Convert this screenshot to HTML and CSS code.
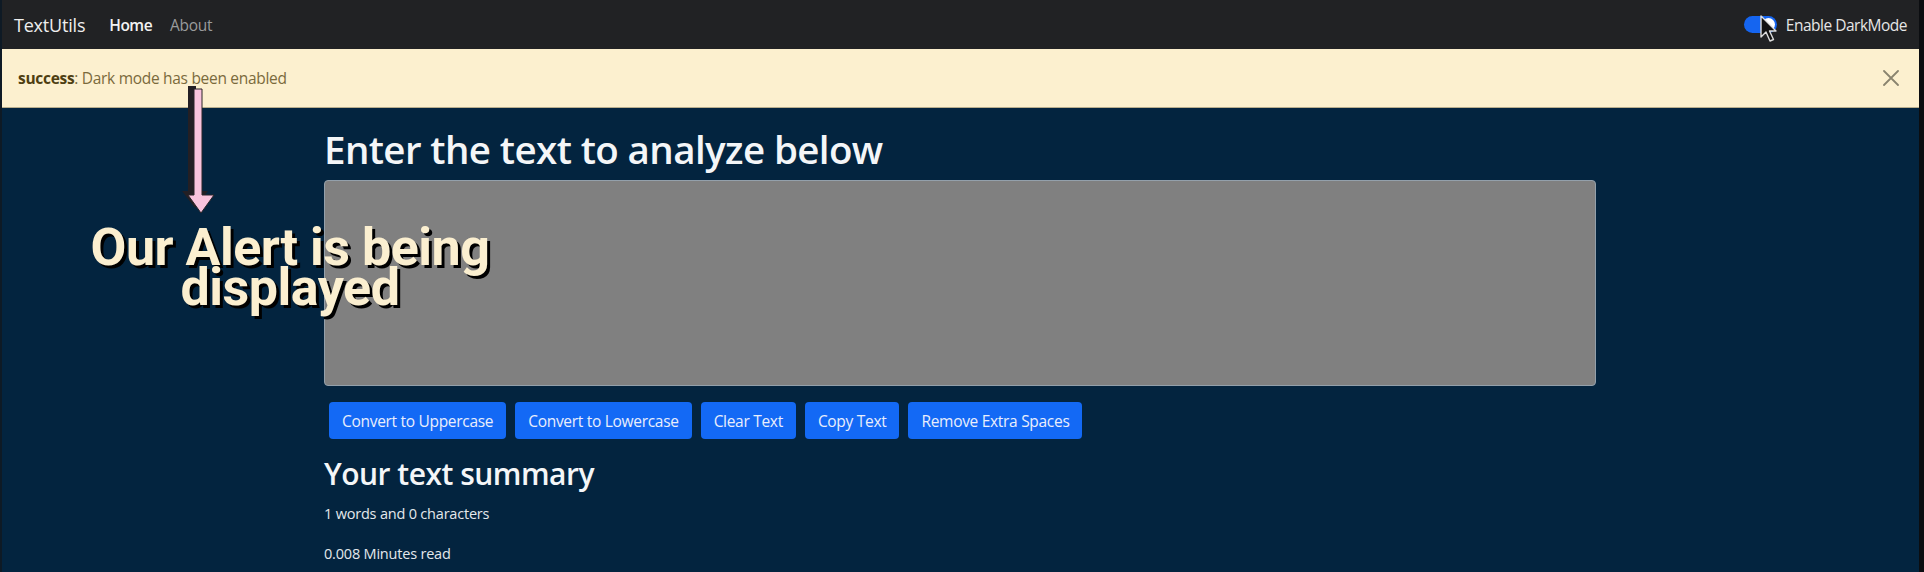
FILE: index.html
```html
<!DOCTYPE html>
<html lang="en">
<head>
<meta charset="utf-8">
<title>TextUtils</title>
<link rel="stylesheet" href="styles.css">
</head>
<body>
<div class="app">
  <nav class="navbar">
    <div class="nav-left">
      <span class="brand">TextUtils</span>
      <a class="nav-link active">Home</a>
      <a class="nav-link">About</a>
    </div>
    <div class="nav-right">
      <span class="switch"><span class="knob"></span></span>
      <label class="switch-label">Enable DarkMode</label>
    </div>
  </nav>

  <div class="alert">
    <span class="alert-text"><strong>success</strong>: Dark mode has been enabled</span>
    <svg class="close" width="16" height="16" viewBox="0 0 16 16"><path d="M1 1L15 15M15 1L1 15" stroke="#8a846f" stroke-width="1.8" fill="none" stroke-linecap="round"/></svg>
  </div>

  <main class="container">
    <h1 class="title">Enter the text to analyze below</h1>
    <textarea class="box" rows="8"></textarea>
    <div class="buttons">
      <button class="btn">Convert to Uppercase</button>
      <button class="btn">Convert to Lowercase</button>
      <button class="btn">Clear Text</button>
      <button class="btn">Copy Text</button>
      <button class="btn">Remove Extra Spaces</button>
    </div>
    <h2 class="summary">Your text summary</h2>
    <p class="stat">1 words and 0 characters</p>
    <p class="stat">0.008 Minutes read</p>
  </main>

  <svg class="arrow" width="50" height="135" viewBox="0 0 50 135">
    <polygon points="16,2 24,2 24,107 36,107 23,124 10,107 16,107" fill="#231f24"/>
    <polygon points="22,5 30,5 30,111 42,111 29,129 16,111 22,111" fill="#f9c3dd" stroke="#2a2428" stroke-width="1"/>
  </svg>

  <div class="caption">Our Alert is being<br>displayed</div>

  <svg class="cursor" width="22" height="30" viewBox="0 0 22 30">
    <path d="M2 1 L2 22 L7 17 L11 26 L14.5 24.5 L10.5 16 L17 16 Z" fill="#111" stroke="#ddd" stroke-width="1.4" stroke-linejoin="round"/>
  </svg>
</div>
</body>
</html>
```

FILE: styles.css
```css
* { box-sizing: border-box; }

html, body {
  margin: 0;
  padding: 0;
}

body {
  background: #0b0d10;
  font-family: "Open Sans", "Liberation Sans", sans-serif;
  color: #ffffff;
  overflow: hidden;
}

.app {
  position: relative;
  margin-right: 5px;
  height: 572px;
  background: #03243f;
  border-left: 2px solid #0e1a25;
}

.navbar {
  height: 49px;
  background: #212224;
  display: flex;
  align-items: center;
  justify-content: space-between;
  padding: 0 12px 0 12px;
}

.nav-left {
  display: flex;
  align-items: center;
}

.brand {
  font-size: 18px;
  color: #eeeeee;
  margin-right: 24px;
  letter-spacing: -0.2px;
}

.nav-link {
  font-size: 15.5px;
  margin-right: 18px;
  color: #9a9b9c;
  letter-spacing: -0.3px;
}

.nav-link.active {
  color: #f2f2f2;
  font-weight: 600;
  letter-spacing: -0.5px;
}

.nav-right {
  display: flex;
  align-items: center;
}

.switch {
  width: 33px;
  height: 17px;
  border-radius: 9px;
  background: #1565f0;
  display: flex;
  align-items: center;
  justify-content: flex-end;
  padding-right: 2px;
  margin-right: 9px;
}

.knob {
  width: 13px;
  height: 13px;
  border-radius: 50%;
  background: #ffffff;
}

.switch-label {
  font-size: 15.5px;
  color: #e6e6e6;
  letter-spacing: -0.5px;
}

.alert {
  height: 59px;
  background: #fcf0cf;
  border-bottom: 1px solid #b9ae8d;
  display: flex;
  align-items: center;
  justify-content: space-between;
  padding: 0 20px 0 16px;
  color: #7a6a3c;
  font-size: 15.5px;
  letter-spacing: -0.3px;
}

.alert-text strong {
  color: #4e3f12;
  font-weight: 700;
}

.container {
  margin-left: 322px;
  width: 1272px;
  padding-top: 18px;
}

.title {
  margin: 0 0 8px 0;
  font-size: 38.5px;
  font-weight: 600;
  line-height: 1.2;
  letter-spacing: -0.6px;
  color: #f4f6f8;
}

.box {
  display: block;
  width: 1272px;
  height: 206px;
  background: #808080;
  border: 1px solid #93a0ab;
  border-radius: 4px;
  margin: 0;
  resize: none;
}

.buttons {
  display: flex;
  gap: 9px;
  margin: 16px 0 0 5px;
}

.btn {
  height: 37px;
  padding: 0 13px;
  border: none;
  border-radius: 4px;
  background: #1369f5;
  color: #e9eefc;
  font-family: "Open Sans", "Liberation Sans", sans-serif;
  font-size: 15.5px;
  letter-spacing: -0.3px;
}

.summary {
  margin: 17px 0 10px 0;
  font-size: 30px;
  font-weight: 600;
  line-height: 1.2;
  letter-spacing: -0.5px;
  color: #f4f6f8;
}

.stat {
  margin: 0 0 16px 0;
  font-size: 14.5px;
  line-height: 24px;
  color: #e4e8ec;
  letter-spacing: -0.2px;
}

.arrow {
  position: absolute;
  left: 170px;
  top: 84px;
}

.caption {
  position: absolute;
  left: 58px;
  top: 228px;
  width: 460px;
  text-align: center;
  font-family: Roboto, "Liberation Sans", sans-serif;
  font-weight: 700;
  font-size: 52px;
  line-height: 40px;
  letter-spacing: -0.5px;
  color: #fbefd0;
  text-shadow: 3px 3px 0 #000000;
}

.cursor {
  position: absolute;
  left: 1757px;
  top: 15px;
}
```
